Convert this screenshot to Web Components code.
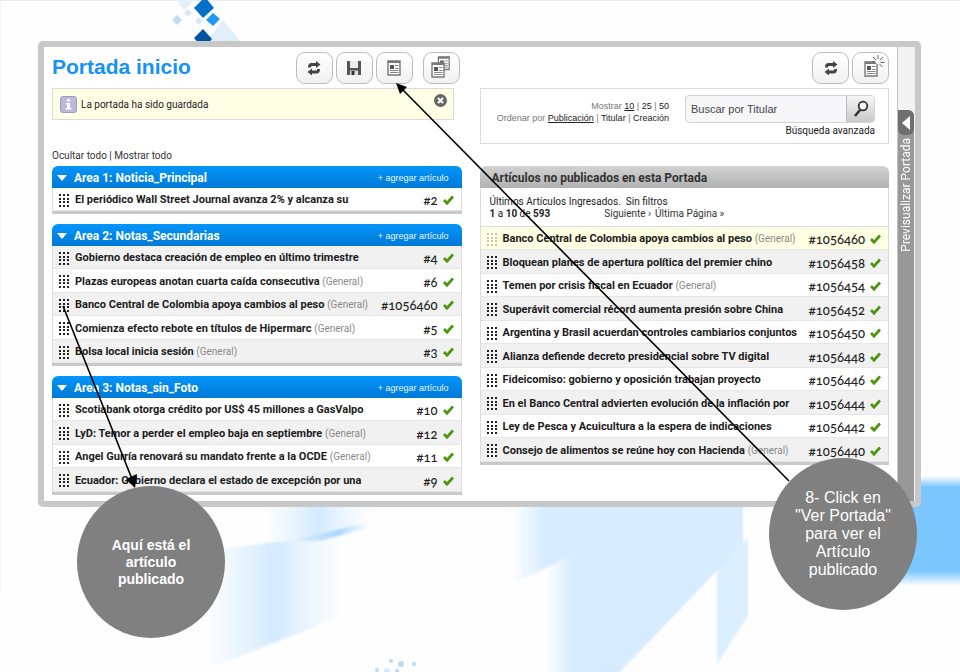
<!DOCTYPE html>
<html lang="es">
<head>
<meta charset="utf-8">
<title>Portada inicio</title>
<style>
  html { min-height: 100%; background: #fefefe; }
  body { margin: 0; min-height: 100vh; position: relative; overflow: hidden; font-family: Roboto, "Liberation Sans", Arial, sans-serif; font-size: 10px; color: #222; }
</style>
</head>
<body>
<slide-page></slide-page>
<script>
const define = (name, html, setup) => {
  const tpl = document.createElement('template');
  tpl.innerHTML = html;
  customElements.define(name, class extends HTMLElement {
    constructor() {
      super();
      this.attachShadow({ mode: 'open' }).appendChild(tpl.content.cloneNode(true));
    }
    connectedCallback() { if (setup) setup(this, this.shadowRoot); }
  });
};

/* Blue abstract backdrop behind the window */
define('slide-backdrop', `
<style>
  :host { position: absolute; inset: 0; display: block; }
  svg { width: 100%; height: 100%; display: block; }
</style>
<svg viewBox="0 0 960 672" preserveAspectRatio="xMidYMid slice" aria-hidden="true">
  <defs>
    <linearGradient id="a"><stop offset="0" stop-color="#d8edff" stop-opacity="0"/><stop offset=".5" stop-color="#d3eaff"/><stop offset="1" stop-color="#e4f3ff" stop-opacity="0"/></linearGradient>
    <linearGradient id="b" gradientUnits="userSpaceOnUse" x1="512" x2="545"><stop offset="0" stop-color="#d7edff" stop-opacity="0"/><stop offset="1" stop-color="#d7edff"/></linearGradient>
    <linearGradient id="e" gradientUnits="userSpaceOnUse" x1="546" x2="572"><stop offset="0" stop-color="#d7edff" stop-opacity="0"/><stop offset="1" stop-color="#d7edff"/></linearGradient>
    <linearGradient id="d"><stop offset="0" stop-color="#9bd2fc" stop-opacity="0"/><stop offset=".6" stop-color="#a9d8fc"/><stop offset="1" stop-color="#d7edff" stop-opacity="0"/></linearGradient>
    <linearGradient id="c" x2="0" y2="1"><stop offset="0" stop-color="#7cc6ff" stop-opacity="0"/><stop offset=".1" stop-color="#7cc6ff"/><stop offset=".86" stop-color="#7cc6ff"/><stop offset="1" stop-color="#7cc6ff" stop-opacity="0"/></linearGradient>
    <filter id="s"><feGaussianBlur stdDeviation="1"/></filter>
  </defs>
  <rect width="960" height="1" fill="#ececec"/>
  <rect width="1" height="590" y="0" fill="#eef5fb"/>
  <g filter="url(#s)">
    <path d="M265 495H372V524L300 540L265 542Z" fill="url(#a)"/>
    <path d="M205 551L300 539L345 529V615L205 670Z" fill="url(#a)"/>
    <path d="M290 541L320 534L372 521V527L320 541Z" fill="url(#d)"/>
    <path d="M512 495H572V556L512 584Z" fill="url(#b)"/>
    <path d="M571 495H743V544L618 674H546V569L571 556Z" fill="url(#e)"/>
    <path d="M717 570L748 538V616L717 664Z" fill="#dceffe"/>
  </g>
  <rect x="880" y="476" width="80" height="110" fill="url(#c)"/>
  <path d="M223 20L241 42H206Z" fill="#e0effb"/>
  <path d="M185 -5L192 3L185 10L178 3Z" fill="#e2f0fb"/>
  <path d="M188 9L192 13L188 17L184 13Z" fill="#d5e8fa"/>
  <path d="M177 15L182 20L177 25L172 20Z" fill="#bcdcf8"/>
  <path d="M199 17L203 21L199 25L195 21Z" fill="#d8eafa"/>
  <path d="M205 -3L214 8L203 18L194 8Z" fill="#0670c8"/>
  <path d="M213 13L220 19L213 26L206 20Z" fill="#1d9af7"/>
  <path d="M203 29L212 39L208 44H199L194 38Z" fill="#04559f"/>
  <g fill="#b5dbfb"><circle cx="391" cy="661" r="2"/><circle cx="401" cy="664" r="3"/><circle cx="414" cy="664" r="2"/><circle cx="377" cy="670" r="2"/><circle cx="387" cy="671" r="3" opacity=".6"/><circle cx="397" cy="671" r="2"/></g>
</svg>`);

const PAGE = '<path d="M1 1h12v14H1z" fill="#fff" stroke="#777" stroke-width="1.4"/><path d="M1 1h12v2H1z" fill="#777"/><path d="M3 5h4v4H3z" fill="#555"/><path d="M8 5.500h3.500M8 8.500h3.500M3 10.500h8.500M3 12.500h8.500" stroke="#888"/>';
const ICONS = {
  refresh: '<g fill="none" stroke="#444" stroke-width="3"><path d="M11 4.500H5.500Q3.500 4.500 3.500 7.500"/><path d="M5 12h5.500Q12.500 12 12.500 9"/></g><path d="M10 1l4.500 3.500L10 8zM6 8.500L1.500 12L6 15.500z" fill="#444"/>',
  save: '<path d="M1 1h14v14H1z" fill="#555"/><path d="M4 1h8v7H4z" fill="#ececec"/><path d="M4 10.500h8V15H4z" fill="#ddd"/><path d="M5.500 11h3v4h-3z" fill="#333"/>',
  page: `<g transform="translate(1 0)">${PAGE}</g>`,
  pages: `<g transform="translate(4.500 -4) scale(.9)">${PAGE}</g><g transform="translate(-2 2)">${PAGE}</g>`,
  fresh: `<g transform="translate(1 1)">${PAGE}</g><circle cx="15" cy="1" r="3" fill="#fafafa"/><path d="M15-1v-4M13 0l-3-3M17 0l3-3M17.500 2.500h4M16.500 4l3 3M12.500 2H9" stroke="#666"/>`
};
define('tool-button', `
<style>
  :host { display: block; }
  button { box-sizing: border-box; width: 37px; height: 32px; padding: 0; display: grid; place-items: center; border: 1px solid #bdbdbd; border-radius: 9px; background: linear-gradient(#fff, #f1f1f1); }
  svg { width: 16px; height: 16px; overflow: visible; }
</style>
<button type="button"><svg viewBox="0 0 16 16" aria-hidden="true"></svg></button>`, (el, root) => {
  root.querySelector('button').setAttribute('aria-label', el.getAttribute('label'));
  root.querySelector('svg').innerHTML = ICONS[el.getAttribute('icon')];
});

define('saved-notice', `
<style>
  :host { box-sizing: border-box; display: flex; align-items: center; gap: 4px; height: 32px; margin-right: 8px; padding: 0 6px 0 7px; background: #ffffe6; border: 1px solid #dcdcd2; }
  p { flex: 1; margin: 0; font-size: 10px; }
  button { align-self: flex-start; display: block; padding: 0; margin-top: 5px; border: 0; background: none; width: 13px; height: 13px; }
  svg { display: block; }
</style>
<svg width="17" height="17" viewBox="0 0 17 17" aria-hidden="true"><rect x=".5" y=".5" width="16" height="16" rx="2.500" fill="#bdb9da" stroke="#9f9bbd"/><path d="M7 3h3v2.500H7zM6 7h4v5h1.500v1.500h-6V12H7V8.500H6z" fill="#fff"/></svg>
<p><slot></slot></p>
<button type="button" aria-label="Cerrar"><svg width="13" height="13" viewBox="0 0 13 13"><circle cx="6.500" cy="6.500" r="6.500" fill="#666"/><path d="M4 4l5 5M9 4l-5 5" stroke="#fff" stroke-width="2"/></svg></button>`);

define('article-row', `
<style>
  :host { box-sizing: border-box; display: flex; align-items: center; padding: 2px 7px 0 6px; background: #fff; border-bottom: 1px solid #e6e6e6; }
  :host([shade="grey"]) { background: #f1f1f1; }
  :host([shade="new"]) { background: #ffffe3; }
  .grip { flex: none; width: 10px; height: 13px; margin-right: 6px; fill: #222; }
  :host([shade="new"]) .grip { fill: #c9c9ae; }
  .name { flex: 1; white-space: nowrap; font-size: 11px; line-height: 14px; }
  b { color: #1c1c1c; }
  small { font-size: 10px; color: #8a8a8a; }
  .id { font: 500 13px/16px Lato, "Liberation Sans", sans-serif; font-variant-numeric: oldstyle-nums; color: #222; margin-right: 5px; }
  .ok { flex: none; width: 11px; height: 10px; }
</style>
<svg class="grip" viewBox="0 0 10 13" aria-hidden="true"></svg>
<span class="name"><b><slot></slot></b> <small></small></span>
<span class="id"></span>
<svg class="ok" viewBox="0 0 11 10" aria-hidden="true"><path d="M1 5l3 3.200L10 1.500" fill="none" stroke="#4f9410" stroke-width="2.800"/></svg>`, (el, root) => {
  let dots = '';
  for (let y = 0; y < 4; y++) for (let x = 0; x < 3; x++) dots += `<rect x="${x * 4}" y="${[0, 4, 7, 11][y]}" width="2" height="2"/>`;
  root.querySelector('.grip').innerHTML = dots;
  const tag = root.querySelector('small');
  if (el.hasAttribute('tag')) tag.textContent = `(${el.getAttribute('tag')})`; else tag.remove();
  root.querySelector('.id').textContent = '#' + el.getAttribute('num');
});

const LIST_CSS = `
  .rows { display: block; border: solid #ddd; border-width: 0 1px; }
  ::slotted(article-row) { height: 23px; }
  ::slotted(article-row:nth-of-type(even)) { height: 24px; }
  .bar { height: 3px; background: #c9c9c9; }`;
define('area-panel', `
<style>
  :host { display: block; }
  header { box-sizing: border-box; height: 22px; display: flex; align-items: center; gap: 7px; padding: 1px 13px 0 5px; color: #fff; background: linear-gradient(#0396fa, #0079d6); border-radius: 6px 6px 0 0; }
  .fold { padding: 0; border: 0; background: none; width: 10px; height: 6px; }
  .fold svg { display: block; }
  h2 { flex: 1; margin: 0; font-size: 12px; line-height: 14px; }
  a { color: #e6f4ff; text-decoration: none; font-size: 9px; font-family: "Liberation Sans", Arial, sans-serif; }
  ${LIST_CSS}
</style>
<header><button class="fold" type="button" aria-label="Plegar"><svg width="10" height="6" viewBox="0 0 10 6"><path d="M0 0h10L5 6z" fill="#fff"/></svg></button><h2></h2><a href="#">+ agregar artículo</a></header>
<div class="rows"><slot></slot></div><div class="bar"></div>`, (el, root) => { root.querySelector('h2').textContent = el.getAttribute('heading'); });

define('pool-panel', `
<style>
  :host { display: block; }
  h2 { box-sizing: border-box; height: 22px; margin: 0; padding: 0 12px; font-size: 12px; line-height: 24px; color: #333; background: linear-gradient(#d2d2d2, #b1b1b1); border-radius: 6px 6px 0 0; }
  .info { box-sizing: border-box; height: 39px; padding: 8px 9px 0; border: solid #ddd; border-width: 0 1px 1px; font-size: 10px; line-height: 12px; }
  p { margin: 0; }
  .pager { display: flex; }
  .links { margin-left: 54px; display: flex; gap: 4px; }
  a { color: #333; text-decoration: none; }
  ${LIST_CSS}
</style>
<h2>Artículos no publicados en esta Portada</h2>
<div class="info"><p>Últimos Artículos Ingresados.&nbsp; Sin filtros</p>
<div class="pager"><span><b>1</b> a <b>10</b> de <b>593</b></span><nav class="links"><a href="#">Siguiente ›</a><a href="#">Última Página »</a></nav></div></div>
<div class="rows"><slot></slot></div><div class="bar"></div>`);

define('search-box', `
<style>
  :host { box-sizing: border-box; display: flex; justify-content: flex-end; gap: 16px; height: 56px; padding: 6px 13px 0 0; border: 1px solid #dcdcdc; background: #fff; font-size: 10px; line-height: 12px; }
  .sort { flex: 1; padding-top: 5px; display: grid; align-content: start; justify-items: end; color: #777; white-space: nowrap; font-family: "Liberation Sans", Arial, sans-serif; font-size: 9px; }
  p { margin: 0; }
  a { color: #222; text-decoration: none; }
  a.on { text-decoration: underline; }
  form { margin: 0; flex: 0 0 190px; display: grid; gap: 2px; align-content: start; }
  .field { display: flex; height: 28px; box-sizing: border-box; border: 1px solid #d4d4d8; border-radius: 4px; background: #f7f7fa; overflow: hidden; }
  input { flex: 1; min-width: 0; border: 0; padding: 0 5px; background: none; font: 11px "Liberation Sans", Arial, sans-serif; color: #444; outline: 0; }
  input::placeholder { color: #444; opacity: 1; }
  button { width: 28px; padding: 0; border: 0; border-left: 1px solid #bbb; background: linear-gradient(#f6f6f6, #c9c9c9); display: grid; place-items: center; }
  .adv { justify-self: end; }
</style>
<div class="sort"><p>Mostrar <a class="on" href="#">10</a> | <a href="#">25</a> | <a href="#">50</a></p>
<p>Ordenar por <a class="on" href="#">Publicación</a> | <a href="#">Titular</a> | <a href="#">Creación</a></p></div>
<form><div class="field"><input type="text" aria-label="Buscar por Titular" placeholder="Buscar por Titular"><button type="button" aria-label="Buscar"><svg width="16" height="18" viewBox="0 0 16 18"><circle cx="10" cy="6" r="4.300" fill="#f4f4f4" stroke="#333" stroke-width="1.800"/><path d="M7 10L2 16" stroke="#333" stroke-width="2.600"/></svg></button></div><a class="adv" href="#">Búsqueda avanzada</a></form>`);

define('preview-rail', `
<style>
  :host { box-sizing: border-box; display: flex; flex-direction: column; width: 18px; padding-top: 63px; border-left: 1px solid #c4c4c4; background: #f3f3f3; }
  button { flex: 1; display: flex; flex-direction: column; align-items: stretch; padding: 0; margin-right: 1px; border: 0; border-radius: 0 6px 0 0; overflow: hidden; background: #989898; color: #fff; font: 12px Roboto, "Liberation Sans", sans-serif; }
  i { flex: none; height: 25px; display: grid; place-items: center; background: #6f6f6f; border-radius: 0 0 6px 6px; }
  span { writing-mode: vertical-rl; transform: rotate(180deg); align-self: center; margin-top: 3px; line-height: 14px; }
</style>
<button type="button"><i><svg width="8" height="14" viewBox="0 0 8 14"><path d="M8 0v14L0 7z" fill="#fff"/></svg></i><span>Previsualizar Portada</span></button>`);

define('app-window', `
<style>
  :host { display: grid; grid-template-columns: minmax(0, 1fr) auto; margin: 41px 39px 0 38px; border: 6px solid #c8c8c8; border-radius: 5px; background: #fff; position: relative; }
  main { display: grid; grid-template-columns: minmax(0, 1fr) minmax(0, 1fr); gap: 18px; padding: 5px 8px 6px; align-items: start; }
  .top { display: flex; align-items: flex-start; gap: 3px; height: 36px; }
  .left .top { padding-right: 2px; }
  .top tool-button.apart { margin-left: 7px; }
  .right .top { justify-content: flex-end; }
  h1 { flex: 1; margin: 0; font: bold 21px/29px "Liberation Sans", Arial, sans-serif; color: #1592f7; white-space: nowrap; }
  .toggle { margin: 30px 0 4px; height: 12px; font-size: 10px; line-height: 12px; }
  .toggle a { color: #333; text-decoration: none; }
  .areas { display: grid; gap: 10px; }
  pool-panel { margin-top: 22px; }
</style>
<main>
<section class="left">
  <div class="top"><h1>Portada inicio</h1><tool-button icon="refresh" label="Actualizar"></tool-button><tool-button icon="save" label="Guardar"></tool-button><tool-button icon="page" label="Ver Portada"></tool-button><tool-button class="apart" icon="pages" label="Ver portadas"></tool-button></div>
  <saved-notice>La portada ha sido guardada</saved-notice>
  <div class="toggle"><a href="#">Ocultar todo</a> | <a href="#">Mostrar todo</a></div>
  <div class="areas">
    <area-panel heading="Area 1: Noticia_Principal">
      <article-row num="2">El periódico Wall Street Journal avanza 2% y alcanza su</article-row>
    </area-panel>
    <area-panel heading="Area 2: Notas_Secundarias">
      <article-row shade="grey" num="4">Gobierno destaca creación de empleo en último trimestre</article-row>
      <article-row num="6" tag="General">Plazas europeas anotan cuarta caída consecutiva</article-row>
      <article-row shade="grey" num="1056460" tag="General">Banco Central de Colombia apoya cambios al peso</article-row>
      <article-row num="5" tag="General">Comienza efecto rebote en títulos de Hipermarc</article-row>
      <article-row shade="grey" num="3" tag="General">Bolsa local inicia sesión</article-row>
    </area-panel>
    <area-panel heading="Area 3: Notas_sin_Foto">
      <article-row num="10">Scotiabank otorga crédito por US$ 45 millones a GasValpo</article-row>
      <article-row shade="grey" num="12" tag="General">LyD: Temor a perder el empleo baja en septiembre</article-row>
      <article-row num="11" tag="General">Angel Gurría renovará su mandato frente a la OCDE</article-row>
      <article-row shade="grey" num="9">Ecuador: Gobierno declara el estado de excepción por una</article-row>
    </area-panel>
  </div>
</section>
<section class="right">
  <div class="top"><tool-button icon="refresh" label="Actualizar"></tool-button><tool-button icon="fresh" label="Nuevo artículo"></tool-button></div>
  <search-box></search-box>
  <pool-panel>
    <article-row shade="new" num="1056460" tag="General">Banco Central de Colombia apoya cambios al peso</article-row>
    <article-row shade="grey" num="1056458">Bloquean planes de apertura política del premier chino</article-row>
    <article-row num="1056454" tag="General">Temen por crisis fiscal en Ecuador</article-row>
    <article-row shade="grey" num="1056452">Superávit comercial récord aumenta presión sobre China</article-row>
    <article-row num="1056450">Argentina y Brasil acuerdan controles cambiarios conjuntos</article-row>
    <article-row shade="grey" num="1056448">Alianza defiende decreto presidencial sobre TV digital</article-row>
    <article-row num="1056446">Fideicomiso: gobierno y oposición trabajan proyecto</article-row>
    <article-row shade="grey" num="1056444">En el Banco Central advierten evolución de la inflación por</article-row>
    <article-row num="1056442">Ley de Pesca y Acuicultura a la espera de indicaciones</article-row>
    <article-row shade="grey" num="1056440" tag="General">Consejo de alimentos se reúne hoy con Hacienda</article-row>
  </pool-panel>
</section>
</main>
<preview-rail></preview-rail>`);

define('call-out', `
<style>
  :host { position: absolute; display: grid; place-items: center; width: 148px; height: 152px; border-radius: 50%; background: #808080; color: #fff; font-family: "Liberation Sans", Arial, sans-serif; font-size: 16px; line-height: 18px; text-align: center; box-sizing: border-box; }
  :host([strong]) { font-size: 14px; line-height: 17px; font-weight: bold; }
</style>
<div><slot></slot></div>`);

define('pointer-lines', `
<style>
  :host { position: absolute; left: 0; top: 0; pointer-events: none; }
  svg { display: block; }
</style>
<svg width="960" height="672" viewBox="0 0 960 672" aria-hidden="true">
  <path d="M63 306L132 479M789 481L403 90" stroke="#000" stroke-width="1.600"/>
  <path d="M135 488L126 479L137 474ZM396 83L407 87L400 94Z" fill="#000"/>
</svg>`);

define('slide-page', `
<style>
  :host { display: flow-root; }
  .shown { left: 77px; top: 486px; }
  .step { left: 769px; top: 458px; }
</style>
<slide-backdrop></slide-backdrop>
<app-window></app-window>
<pointer-lines></pointer-lines>
<call-out class="shown" strong>Aquí está el<br>artículo<br>publicado</call-out>
<call-out class="step">8- Click en<br>"Ver Portada"<br>para ver el<br>Artículo<br>publicado</call-out>`);
</script>
</body>
</html>
